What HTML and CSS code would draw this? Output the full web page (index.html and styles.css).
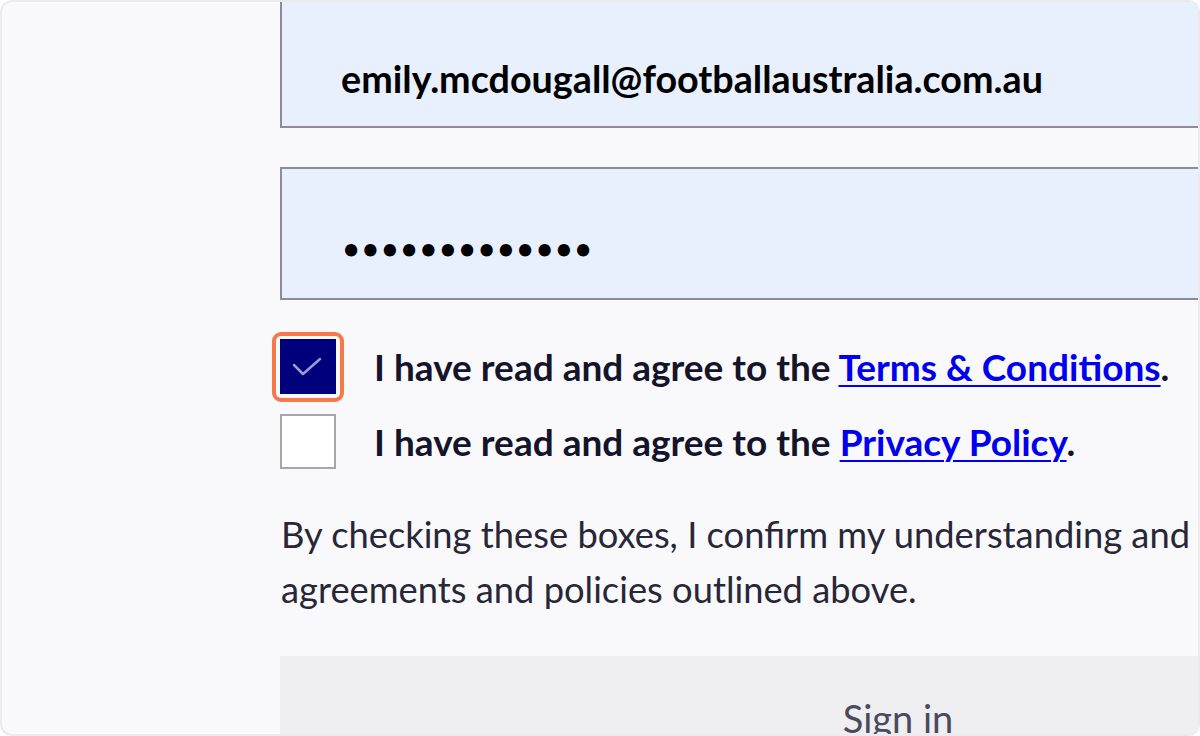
FILE: index.html
```html
<!DOCTYPE html>
<html lang="en">
<head>
<meta charset="utf-8">
<title>Sign in</title>
<link rel="stylesheet" href="styles.css">
</head>
<body>
<div class="card">
  <form class="form">
    <input class="field field-email" type="email" value="emily.mcdougall@footballaustralia.com.au" aria-label="Email">
    <input class="field field-password" type="password" value="abcdefghijklm" aria-label="Password">
    <div class="checks">
      <label class="check">
        <span class="box box-checked">
          <svg class="tick" viewBox="0 0 56 56" width="56" height="56"><polyline points="14,26 23,35 40,20" fill="none" stroke="#9b9bd0" stroke-width="2.5" stroke-linecap="round" stroke-linejoin="round"/></svg>
        </span>
        <span class="check-text">I have read and agree to the <a href="#">Terms &amp; Conditions</a>.</span>
      </label>
      <label class="check">
        <span class="box"></span>
        <span class="check-text">I have read and agree to the <a href="#">Privacy Policy</a>.</span>
      </label>
    </div>
    <p class="note">By checking these boxes, I confirm my understanding and acceptance of the agreements and policies outlined above.</p>
    <button class="submit" type="button">Sign in</button>
  </form>
</div>
</body>
</html>
```
FILE: styles.css
```css
html, body {
  margin: 0;
  padding: 0;
  background: #ffffff;
}
body {
  font-family: Lato, "Noto Sans", sans-serif;
}
.card {
  box-sizing: border-box;
  width: 1200px;
  height: 736px;
  border: 2px solid #ebebee;
  border-radius: 12px;
  background: #f9f9fb;
  overflow: hidden;
}
.form {
  display: flex;
  flex-direction: column;
  width: 1236px;
  margin: -7px 0 0 278px;
}
.field {
  box-sizing: border-box;
  width: 100%;
  height: 133px;
  margin: 0;
  padding: 34px 0 0 59px;
  border: 2px solid #8d8d99;
  border-radius: 0;
  background: #e8f0fe;
  font-family: Lato, "Noto Sans", sans-serif;
  font-weight: 700;
  font-size: 37.7px;
  color: #000000;
  outline: none;
}
.field-password {
  margin-top: 39px;
  padding-top: 28px;
  padding-left: 61px;
  font-size: 28px;
  letter-spacing: 3.1px;
}
.checks {
  display: flex;
  flex-direction: column;
  gap: 20px;
  margin-top: 39px;
}
.check {
  display: flex;
  align-items: center;
  gap: 38px;
}
.box {
  position: relative;
  box-sizing: border-box;
  flex: none;
  width: 56px;
  height: 55px;
  border: 2px solid #a6a6ae;
  background: #ffffff;
}
.box-checked {
  border-color: #00007d;
  background: #00007d;
}
.box-checked::after {
  content: "";
  position: absolute;
  left: -10px;
  top: -9px;
  right: -10px;
  bottom: -10px;
  border: 4px solid #f47a4c;
  border-radius: 9px;
}
.tick {
  position: absolute;
  left: -2px;
  top: -2px;
}
.check-text {
  font-weight: 700;
  font-size: 37px;
  color: #14142a;
  white-space: nowrap;
}
.check-text a {
  color: #0000ee;
  text-decoration: underline;
  text-decoration-thickness: 2px;
  text-underline-offset: 4px;
}
.note {
  margin: 38px 0 0 1px;
  font-size: 36.3px;
  line-height: 55px;
  color: #272738;
}
.submit {
  margin-top: 39px;
  height: 120px;
  border: 0;
  background: #efeff2;
  font-family: Lato, "Noto Sans", sans-serif;
  font-size: 38px;
  color: #4a4a5e;
  padding: 39px 0 0 0;
  align-self: stretch;
  display: flex;
  justify-content: center;
  align-items: flex-start;
}
```
